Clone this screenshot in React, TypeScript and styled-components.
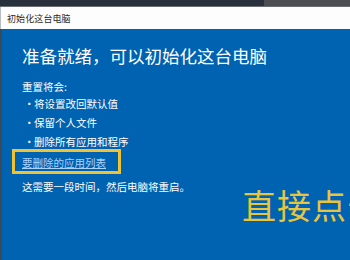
import React from "react";
import styled, { createGlobalStyle } from "styled-components";

const Global = createGlobalStyle`
  html, body { margin: 0; padding: 0; background: #0063b1; }
  * { box-sizing: border-box; }
`;

const FONT = `"Noto Sans CJK SC", "Noto Sans", sans-serif`;

const Screen = styled.div`
  position: relative;
  width: 350px;
  height: 260px;
  overflow: hidden;
  display: flex;
  flex-direction: column;
  font-family: ${FONT};
`;

const TopStrip = styled.div`
  height: 7px;
  display: flex;
  border-bottom: 1px solid #6a6e73;
`;

const TopPart = styled.div<{ $w?: string; $bg: string }>`
  flex: ${(p) => (p.$w ? `0 0 ${p.$w}` : "1")};
  background: ${(p) => p.$bg};
`;

const TitleBar = styled.div`
  height: 22px;
  background: #fdfdfd;
  border-left: 1px solid #b8bcc0;
  display: flex;
  align-items: center;
  padding-left: 6px;
  font-size: 9px;
  color: #2a2a2a;
  letter-spacing: 0.1px;
`;

const Body = styled.div`
  flex: 1;
  background: #0063b1;
  border-left: 2px solid #3b4a5a;
  padding: 15px 0 0 20px;
  color: #ffffff;
  display: flex;
  flex-direction: column;
  align-items: flex-start;
`;

const Heading = styled.h1`
  margin: 0 0 9px;
  font-size: 17.5px;
  line-height: 24px;
  font-weight: 400;
  white-space: nowrap;
`;

const Line = styled.div<{ $mt?: number }>`
  font-size: 10.5px;
  line-height: 19px;
  margin-top: ${(p) => p.$mt ?? 0}px;
  white-space: nowrap;
`;

const List = styled.ul`
  list-style: none;
  margin: -2px 0 0;
  padding: 0;
`;

const Item = styled.li`
  display: flex;
  font-size: 10.5px;
  line-height: 19px;
  white-space: nowrap;
`;

const Dot = styled.span`
  width: 12px;
  padding-left: 2px;
`;

const Highlight = styled.div`
  margin: -2px 0 0 -10px;
  border: 3px solid #f1c232;
  padding: 0 12px 0 7px;
  line-height: 17px;
`;

const Link = styled.a`
  font-size: 10.5px;
  color: #a9d2ff;
  text-decoration: underline;
  text-underline-offset: 1px;
  white-space: nowrap;
`;

const Annotation = styled.div`
  position: absolute;
  left: 242px;
  top: 188px;
  font-size: 34px;
  line-height: 1;
  color: #e8c53c;
  white-space: nowrap;
  letter-spacing: 1px;
`;

export default function App() {
  return (
    <Screen>
      <Global />
      <TopStrip>
        <TopPart $w="264px" $bg="#28313b" />
        <TopPart $bg="#4b4d50" />
      </TopStrip>
      <TitleBar>初始化这台电脑</TitleBar>
      <Body>
        <Heading>准备就绪，可以初始化这台电脑</Heading>
        <Line>重置将会:</Line>
        <List>
          <Item><Dot>•</Dot>将设置改回默认值</Item>
          <Item><Dot>•</Dot>保留个人文件</Item>
          <Item><Dot>•</Dot>删除所有应用和程序</Item>
        </List>
        <Highlight>
          <Link>要删除的应用列表</Link>
        </Highlight>
        <Line $mt={3}>这需要一段时间，然后电脑将重启。</Line>
      </Body>
      <Annotation>直接点击</Annotation>
    </Screen>
  );
}
